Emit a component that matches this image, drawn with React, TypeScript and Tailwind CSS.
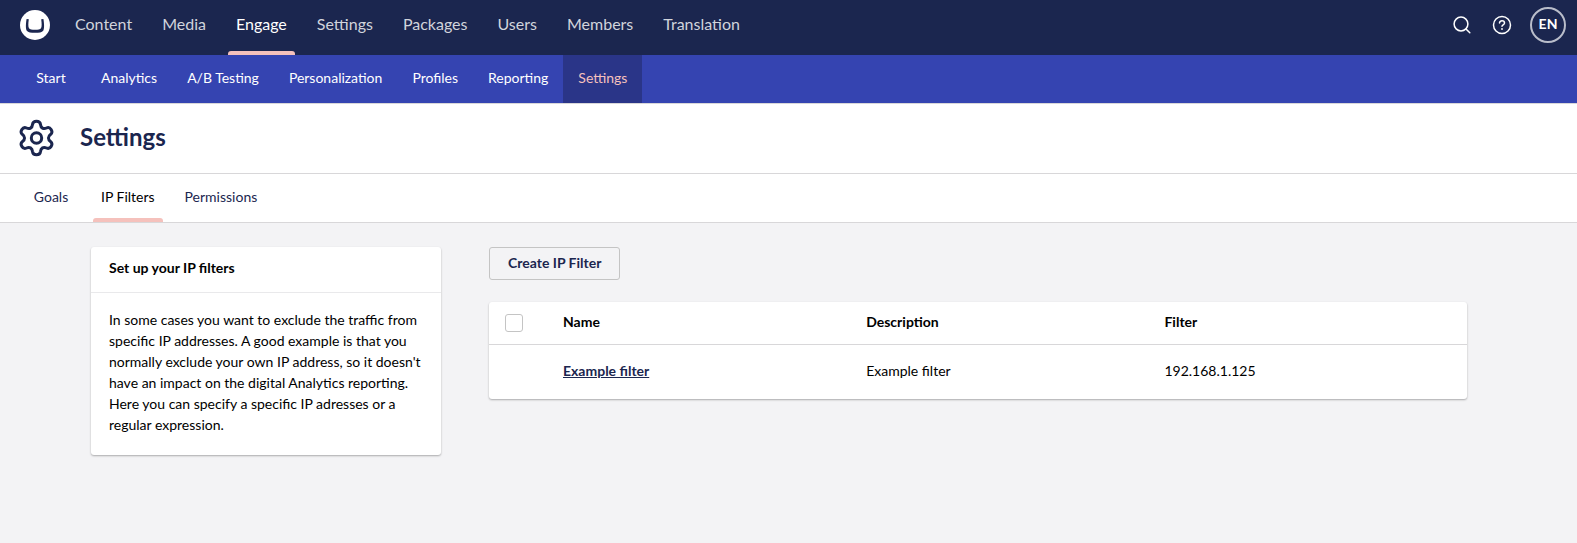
import React from 'react';

const sections = ['Content', 'Media', 'Engage', 'Settings', 'Packages', 'Users', 'Members', 'Translation'];
const engagePages = ['Start', 'Analytics', 'A/B Testing', 'Personalization', 'Profiles', 'Reporting', 'Settings'];
const settingsTabs = ['Goals', 'IP Filters', 'Permissions'];

const filters = [
  { id: 1, name: 'Example filter', description: 'Example filter', filter: '192.168.1.125' },
];

const Logo = () => (
  <svg viewBox="0 0 30 30" className="w-[30px] h-[30px]" aria-hidden="true">
    <circle cx="15" cy="15" r="15" fill="#fff" />
    <path
      d="M6.6 9 C5.7 14 5.6 19 6.8 20.7 C8 22.500 11 22.800 15 22.800 C19 22.800 22 22.500 23.200 20.700 C24.400 19 24.300 14 23.400 9 L21.200 9.300 C21.800 13.500 21.900 16.800 21 18.200 C20.200 19.500 18 19.700 15 19.700 C12 19.700 9.800 19.500 9 18.200 C8.100 16.800 8.200 13.500 8.800 9.300 Z"
      fill="#1b264f"
    />
  </svg>
);

const SearchIcon = () => (
  <svg viewBox="0 0 18 18" className="w-[18px] h-[18px]" fill="none" stroke="currentColor" strokeWidth="1.5" strokeLinecap="round" aria-hidden="true">
    <circle cx="8" cy="8" r="6.9" />
    <path d="M13 13 L16.800 16.800" />
  </svg>
);

const HelpIcon = () => (
  <svg viewBox="0 0 20 20" className="w-5 h-5" fill="none" stroke="currentColor" strokeWidth="1.5" strokeLinecap="round" strokeLinejoin="round" aria-hidden="true">
    <circle cx="10" cy="10" r="8.5" />
    <path d="M7.500 8 C7.500 4.900 12.500 5 12.500 7.900 C12.500 9.800 10 9.800 10 11.300" />
    <circle cx="10" cy="14" r="0.9" fill="currentColor" stroke="none" />
  </svg>
);

const GearIcon = () => (
  <svg viewBox="0 0 36 38" className="w-9 h-[38px]" fill="none" stroke="#1b264f" strokeWidth="3" strokeLinejoin="round" aria-hidden="true">
    <circle cx="18.500" cy="19" r="5.2" />
    <path d="M14.500 5.500 C15 1.200 22 1.200 22.500 5.500 C22.800 9 25.500 10.500 28.500 9 C32.300 7.200 35.800 13 32.500 15.500 C29.800 17.500 29.800 20.500 32.500 22.500 C35.800 25 32.300 30.800 28.500 29 C25.500 27.500 22.800 29 22.500 32.500 C22 36.800 15 36.800 14.500 32.500 C14.200 29 11.500 27.500 8.500 29 C4.700 30.800 1.200 25 4.500 22.500 C7.200 20.500 7.200 17.500 4.500 15.500 C1.200 13 4.700 7.200 8.500 9 C11.500 10.500 14.200 9 14.500 5.500 Z" />
  </svg>
);

const TopBar = () => (
  <header className="flex h-[55px] items-stretch bg-[#1b264f] pl-5 pr-[11px]">
    <a href="#" aria-label="Home" className="flex items-center pb-[5px] mr-[10px]">
      <Logo />
    </a>
    <nav className="flex">
      {sections.map((section) => {
        const active = section === 'Engage';
        return (
          <a
            key={section}
            href="#"
            className={`relative flex items-center px-[15px] pb-2 text-[16px] ${active ? 'text-white' : 'text-[#d1d4dc]'}`}
          >
            {section}
            {active && <span className="absolute inset-x-[7px] bottom-0 h-1 rounded-t-[3px] bg-[#f5c1bc]" />}
          </a>
        );
      })}
    </nav>
    <div className="ml-auto flex items-center pb-[5px] text-white">
      <button type="button" aria-label="Search" className="mr-[21px]">
        <SearchIcon />
      </button>
      <button type="button" aria-label="Help" className="mr-[18px]">
        <HelpIcon />
      </button>
      <button
        type="button"
        className="flex w-9 h-9 items-center justify-center rounded-full border-2 border-[#b9bdca] pb-[3px] text-[14px] font-bold"
      >
        EN
      </button>
    </div>
  </header>
);

const SubNav = () => (
  <nav className="flex h-12 bg-[#3544b1] pl-4 text-[14px] text-white">
    {engagePages.map((page) => (
      <a
        key={page}
        href="#"
        className={`flex min-w-[70px] items-center justify-center px-[15px] pb-1 ${
          page === 'Settings' ? 'bg-[#2a3588] text-[#f5c1bc]' : ''
        }`}
      >
        {page}
      </a>
    ))}
  </nav>
);

const Tabs = () => (
  <nav className="flex h-[49px] border-b border-[#d8d7d9] bg-white pl-4 text-[14px] text-[#1b264f]">
    {settingsTabs.map((tab) => {
      const active = tab === 'IP Filters';
      return (
        <a
          key={tab}
          href="#"
          className={`relative flex min-w-[70px] items-center justify-center px-[15px] pb-1 ${active ? 'text-black' : ''}`}
        >
          {tab}
          {active && <span className="absolute inset-x-[7px] bottom-0 h-1 rounded-t-[3px] bg-[#f5c1bc]" />}
        </a>
      );
    })}
  </nav>
);

const InfoCard = () => (
  <section className="w-[350px] shrink-0 rounded-[3px] bg-white shadow-[0_1px_2px_rgba(0,0,0,0.3)]">
    <h2 className="border-b border-[#e9e9eb] px-[18px] pt-[10px] pb-[14px] text-[14px] leading-[21px] font-bold">
      Set up your IP filters
    </h2>
    <p className="px-[18px] pt-4 pb-5 text-[14px] leading-[21px]">
      In some cases you want to exclude the traffic from specific IP addresses. A good example is that you normally
      exclude your own IP address, so it doesn't have an impact on the digital Analytics reporting. Here you can
      specify a specific IP adresses or a regular expression.
    </p>
  </section>
);

const FilterTable = () => (
  <div className="rounded-[3px] bg-white shadow-[0_1px_2px_rgba(0,0,0,0.3)]">
    <table className="w-full table-fixed text-left text-[14px]">
      <colgroup>
        <col className="w-[58px]" />
        <col className="w-[31%]" />
        <col className="w-[30.5%]" />
        <col />
      </colgroup>
      <thead>
        <tr className="h-[42px] border-b border-[#d8d7d9]">
          <th className="pl-4">
            <input
              type="checkbox"
              aria-label="Select all filters"
              className="block w-[18px] h-[18px] appearance-none rounded-[3px] border border-[#c4c4c4] bg-white"
            />
          </th>
          <th className="px-4 pb-[2px] font-bold">Name</th>
          <th className="px-4 pb-[2px] font-bold">Description</th>
          <th className="px-4 pb-[2px] font-bold">Filter</th>
        </tr>
      </thead>
      <tbody>
        {filters.map((item) => (
          <tr key={item.id} className="h-[55px]">
            <td />
            <td className="px-4 pb-[2px]">
              <a href="#" className="font-bold text-[#1b264f] underline">
                {item.name}
              </a>
            </td>
            <td className="px-4 pb-[2px]">{item.description}</td>
            <td className="px-4 pb-[2px]">{item.filter}</td>
          </tr>
        ))}
      </tbody>
    </table>
  </div>
);

const App: React.FC = () => (
  <div className="flex min-h-screen flex-col bg-[#f3f3f5] font-['Lato',sans-serif] text-black">
    <TopBar />
    <SubNav />
    <div className="flex h-[71px] items-center border-y border-[#d8d7d9] bg-white pb-[2px] pl-[18px]">
      <GearIcon />
      <h1 className="ml-[26px] pb-[2px] text-[24px] font-bold text-[#1b264f]">Settings</h1>
    </div>
    <Tabs />
    <main className="flex items-start gap-12 pt-6 pl-[91px] pr-[110px]">
      <InfoCard />
      <div className="min-w-0 flex-1">
        <button
          type="button"
          className="mb-[22px] block h-[33px] rounded-[3px] border border-[#c4c4c4] px-[18px] pb-[2px] text-[14px] font-bold text-[#1b264f]"
        >
          Create IP Filter
        </button>
        <FilterTable />
      </div>
    </main>
  </div>
);

export default App;
